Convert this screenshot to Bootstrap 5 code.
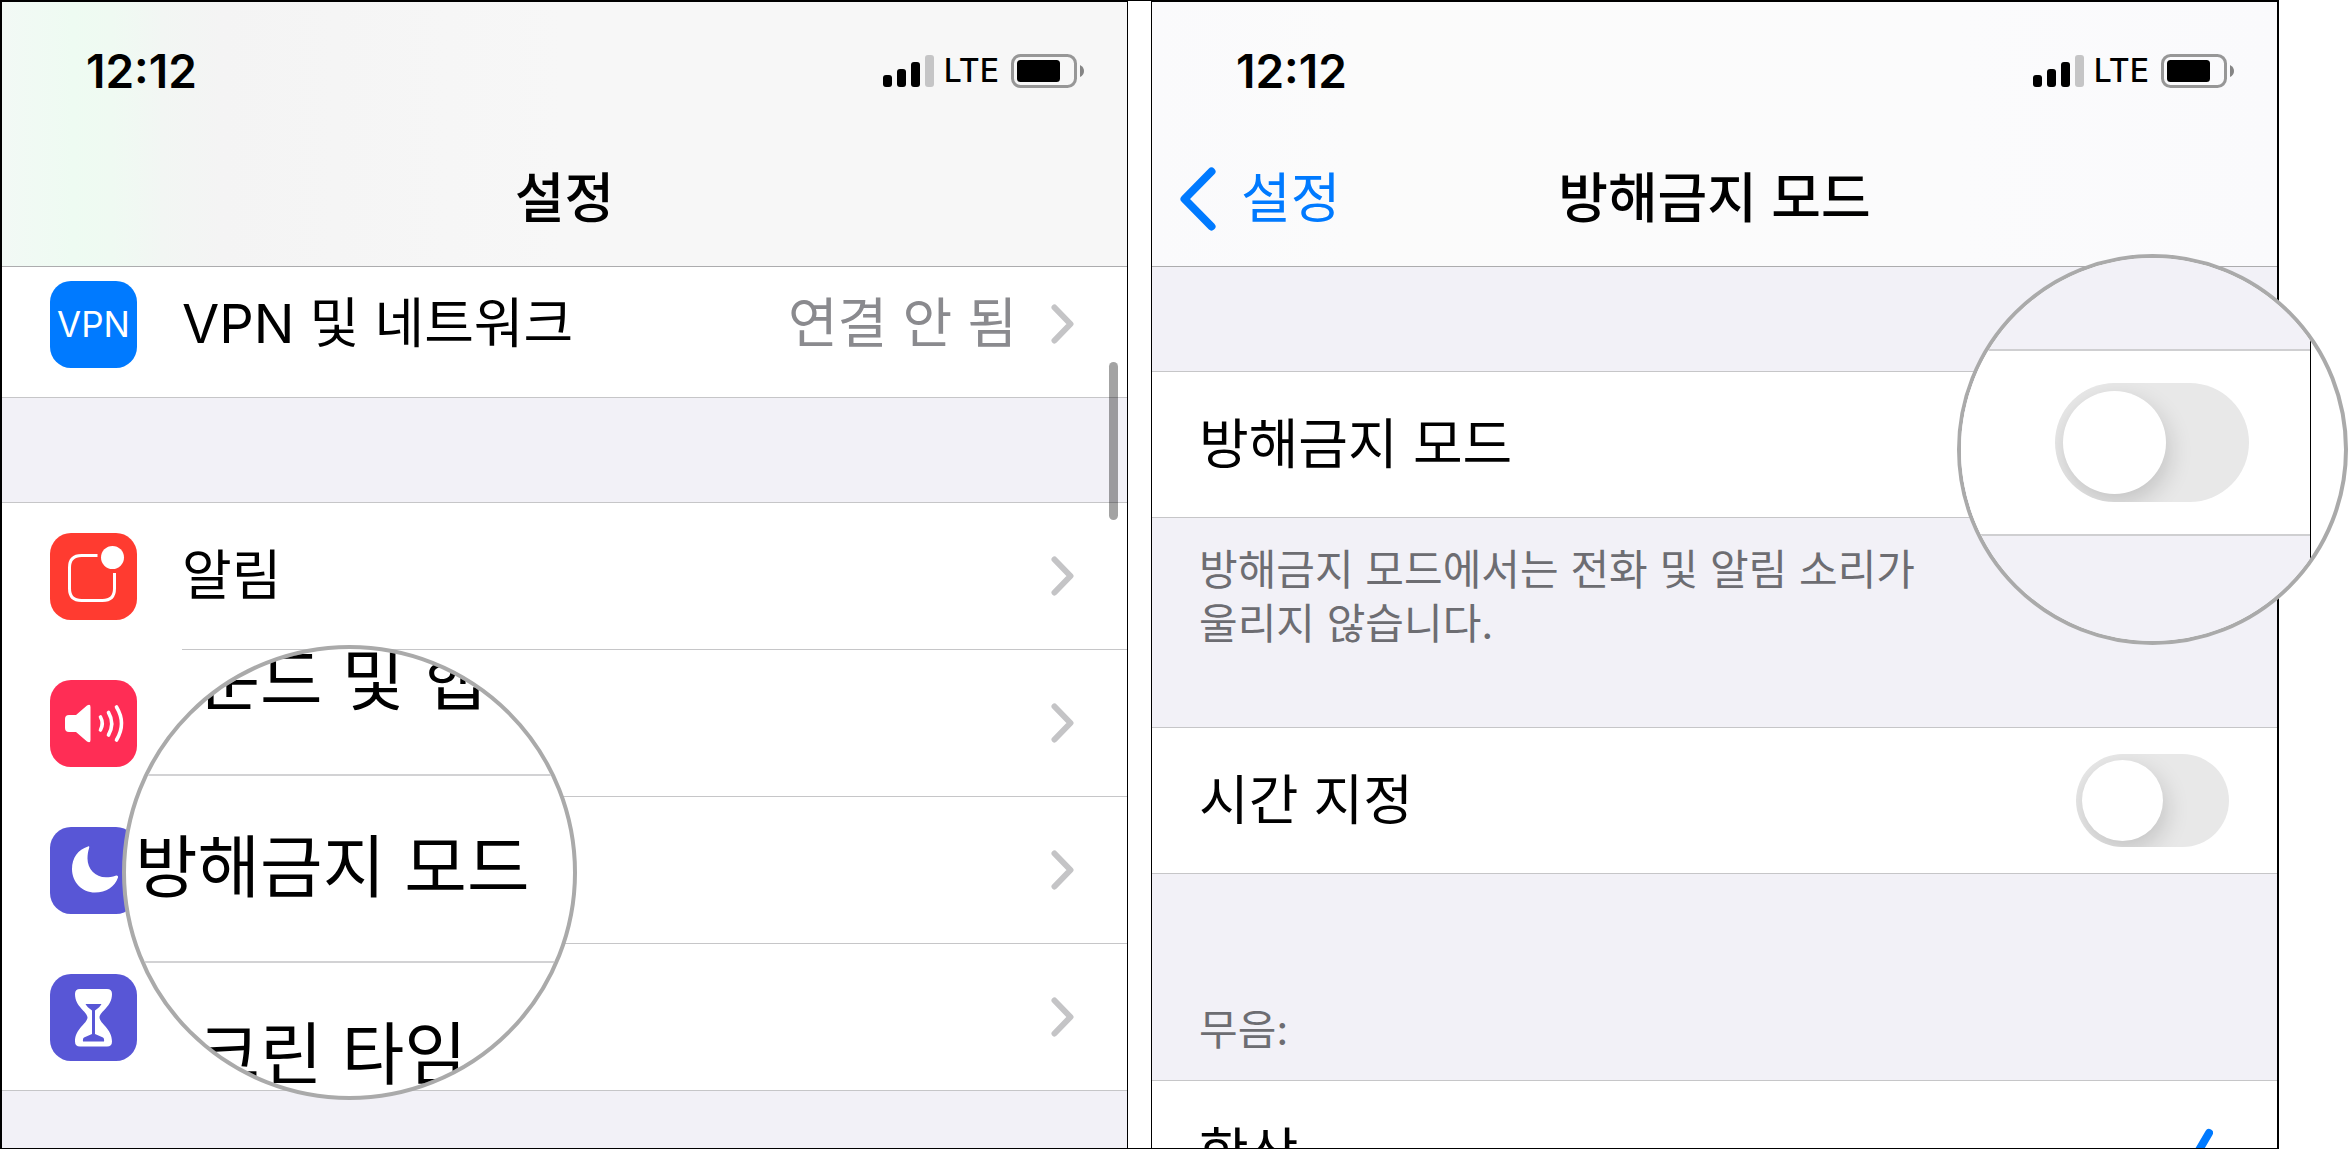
<!DOCTYPE html>
<html lang="ko">
<head>
<meta charset="utf-8">
<meta name="viewport" content="width=device-width, initial-scale=1">
<title>설정 – 방해금지 모드</title>
<link href="https://cdn.jsdelivr.net/npm/bootstrap@5.3.0/dist/css/bootstrap.min.css" rel="stylesheet">
<style>
  :root { --ios-blue: #007aff; --ios-bg: #f2f1f7; --ios-line: #c6c6c8; --ring: #aaa; }
  body { font-family: Inter, "Noto Sans CJK KR", sans-serif; font-size: 54px; line-height: 72px; color: #000; background: #fff; }
  a { color: inherit; text-decoration: none; }
  .stage { height: 100vh; padding-right: 69px; }
  .pair { gap: 23px; border: solid #000; border-width: 1px 0; }
  .phone { flex: 1 1 0; min-width: 0; }
  .screen { height: 100%; background: var(--ios-bg); border-top: 1px solid #000; }
  .screen-a { border-left: 2px solid #000; border-right: 1px solid #000; }
  .screen-b { border-left: 1px solid #000; border-right: 2px solid #000; }

  .topbar { position: relative; z-index: 1; border-bottom: 1px solid #acacae; }
  .topbar-a { background: linear-gradient(90deg, #f2f9f5 0, #eefbf2 70px, #effaf2 110px, #f2f6f3 160px, #f4f4f4 220px, #f7f7f7 560px); }
  .topbar-b { background: linear-gradient(90deg, #fafafc, #fbfbfb 200px, #fbfbfc 800px, #fafafc); }
  .statusbar { height: 138px; padding: 0 43px 0 84px; }
  .clock { font-size: 46px; font-weight: 600; }
  .carrier { font-size: 32px; font-weight: 500; margin: 0 12px 0 9px; }
  .titlebar { display: grid; grid-template-columns: 1fr auto 1fr; align-items: center; height: 126px; padding: 0 27px 9px; }
  .titlebar h1 { grid-column: 2; font-size: 54px; line-height: 72px; font-weight: 500; margin: 0; }
  .back { color: var(--ios-blue); gap: 25px; }

  .group { --bs-list-group-bg: #fff; border: solid var(--ios-line); border-width: 1px 0; border-radius: 0; }
  .cell { display: flex; align-items: center; border: 0; padding: 0 0 0 48px; background: #fff; color: #000; }
  .cell-body { flex: 1; display: flex; align-items: center; height: 147px; margin-left: 45px; padding-right: 53px; border-bottom: 1px solid var(--ios-line); }
  .cell:last-child .cell-body { border-bottom: 0; height: 146px; }
  .cell-plain { height: 145px; padding: 0 48px 0 47px; }
  .scrolled { margin-top: -17px; margin-bottom: 104px; }
  .app-tile { width: 87px; height: 87px; border-radius: 21px; flex: none; font-size: 35px; line-height: 87px; color: #fff; text-align: center; }
  .tile-blue { background: #007aff; } .tile-red { background: #ff3b30; } .tile-pink { background: #ff2d55; } .tile-indigo { background: #5856d6; }
  .detail { color: #8a8a8e; margin-right: 34px; }
  .first-group { margin-top: 104px; }
  .note { font-size: 42px; line-height: 54px; color: #6d6d72; padding: 25px 47px 76px; margin: 0; }
  .group-title { font-size: 42px; line-height: 54px; font-weight: 400; color: #6d6d72; padding: 129px 47px 23px; margin: 0; }
  .scroll-thumb { position: absolute; top: 361px; right: 10px; width: 9px; height: 158px; border-radius: 5px; background: rgba(0,0,0,.36); z-index: 1; }

  .toggle { appearance: none; display: block; position: relative; flex: none; margin: 0; border: 0; width: 153px; height: 93px; border-radius: 47px; background: #e8e8e8; overflow: hidden; }
  .toggle::before { content: ""; position: absolute; inset: 6px auto 6px 6px; aspect-ratio: 1; border-radius: 50%; background: #fff; box-shadow: 3px 9px 24px rgba(0,0,0,.16); }
  .toggle-lg { width: 194px; height: 119px; border-radius: 60px; }
  .toggle-lg::before { inset: 8px auto 8px 8px; }

  .lens { position: absolute; z-index: 2; border: 4px solid var(--ring); border-radius: 50%; overflow: hidden; background: #fff; }
  .lens-a { left: 122px; top: 644px; width: 455px; height: 455px; font-size: 68px; }
  .lens-a .zoomed { margin: -60px 0 0; }
  .lens-a .zoomed-row { height: 187px; padding: 0 0 4px 9px; border-bottom: 2px solid #d2d2d4; white-space: nowrap; }
  .lens-b { right: -69px; top: 253px; width: 391px; height: 391px; }
  .lens-b .edge { height: 100%; margin-right: 33px; border-right: 1px solid #000; background: var(--ios-bg); padding-top: 91px; }
  .lens-b .zoomed-cell { height: 187px; padding-right: 61px; background: #fff; border: solid #cfcfd1; border-width: 2px 0; }
</style>
<script src="https://cdn.jsdelivr.net/npm/bootstrap@5.3.0/dist/js/bootstrap.bundle.min.js"></script>
</head>
<body>
<svg class="d-none" aria-hidden="true">
  <symbol id="signal" viewBox="0 0 52 32"><rect y="20" width="9" height="12" rx="3"/><rect x="14" y="14" width="9" height="18" rx="3"/><rect x="28" y="7" width="9" height="25" rx="3"/><rect x="42" width="9" height="32" rx="3" fill="#c5c5c6"/></symbol>
  <symbol id="battery" viewBox="0 0 73 34"><rect x="1.5" y="1.5" width="63" height="31" rx="8" fill="none" stroke="#979797" stroke-width="3"/><rect x="6" y="6" width="43" height="22" rx="3.5"/><path d="M69 11q4 2 4 6t-4 6z" fill="#858585"/></symbol>
  <symbol id="chevron" viewBox="0 0 23 40"><path d="M3.500 3.500 19.500 20 3.500 36.500" fill="none" stroke="#c4c4c6" stroke-width="6" stroke-linecap="round" stroke-linejoin="round"/></symbol>
</svg>
<div class="stage overflow-hidden">
<div class="pair d-flex h-100">

  <section class="phone position-relative">
    <div class="screen screen-a overflow-hidden">
      <header class="topbar topbar-a">
        <div class="statusbar d-flex align-items-center">
          <span class="clock me-auto">12:12</span>
          <svg width="52" height="32"><use href="#signal"/></svg>
          <span class="carrier">LTE</span>
          <svg width="73" height="34"><use href="#battery"/></svg>
        </div>
        <div class="titlebar"><h1>설정</h1></div>
      </header>

      <nav class="list-group group scrolled">
        <a href="#" class="list-group-item cell">
          <span class="app-tile tile-blue">VPN</span>
          <span class="cell-body"><span class="me-auto">VPN 및 네트워크</span><span class="detail">연결 안 됨</span><svg width="23" height="40"><use href="#chevron"/></svg></span>
        </a>
      </nav>

      <nav class="list-group group">
        <a href="#" class="list-group-item cell">
          <svg class="app-tile tile-red" viewBox="0 0 87 87"><path d="M47.500 22.500H31.500Q19.500 22.500 19.500 34.500V55.500Q19.500 67.500 31.500 67.500H52.500Q64.500 67.500 64.500 55.500V40" fill="none" stroke="#fff" stroke-width="3"/><circle cx="62.500" cy="24.500" r="11.500" fill="#fff"/></svg>
          <span class="cell-body"><span class="me-auto">알림</span><svg width="23" height="40"><use href="#chevron"/></svg></span>
        </a>
        <a href="#" class="list-group-item cell" aria-labelledby="lens-sound">
          <svg class="app-tile tile-pink" viewBox="0 0 87 87"><path d="M19 35h7L37 25.500q3.500-2 3.500 1.500v33q0 3.500-3.500 1.500L26 52h-7q-4 0-4-4v-9q0-4 4-4z" fill="#fff"/><g fill="none" stroke="#fff" stroke-width="3.600" stroke-linecap="round"><path d="M50.500 37q3.500 6.500 0 13"/><path d="M58.500 32.500q6.500 11 0 22.500"/><path d="M66.500 27q10 16.500 0 33"/></g></svg>
          <span class="cell-body justify-content-end"><svg width="23" height="40"><use href="#chevron"/></svg></span>
        </a>
        <a href="#" class="list-group-item cell" aria-labelledby="lens-dnd">
          <svg class="app-tile tile-indigo" viewBox="0 0 87 87"><path d="M38 19.500C28 22.500 22 31 22 42c0 13 10 23.500 23 23.500 11 0 20-6 23-15 .5-1.500-1-2.500-2.500-1.700-3 1.200-6.500 1.500-9.500 1.500-11 0-18.500-8.300-18.500-18.800 0-4 .5-7 1.500-10 .5-1.500.5-2.500-1-2z" fill="#fff"/></svg>
          <span class="cell-body justify-content-end"><svg width="23" height="40"><use href="#chevron"/></svg></span>
        </a>
        <a href="#" class="list-group-item cell" aria-labelledby="lens-time">
          <svg class="app-tile tile-indigo" viewBox="0 0 87 87"><path d="M30 15H57Q62 15 62 20C62 33 50 37 49.500 43.500 50 50 62 54.500 62 67.500Q62 72.500 57 72.500H30Q25 72.500 25 67.500C25 54.500 37 50 37.500 43.500 37 37 25 33 25 20Q25 15 30 15Z" fill="#fff"/><path d="M35.500 30H51.500Q50 33 45 36.500V60L53 63.500Q54.500 64.500 54 67.500H33Q32.500 64.500 34 63.500L42 60V36.500Q37 33 35.500 30Z" fill="#5856d6"/></svg>
          <span class="cell-body justify-content-end"><svg width="23" height="40"><use href="#chevron"/></svg></span>
        </a>
      </nav>
    </div>
    <div class="scroll-thumb"></div>
    <div class="lens lens-a">
      <div class="zoomed">
        <div class="zoomed-row d-flex align-items-center" id="lens-sound">사운드 및 햅틱</div>
        <div class="zoomed-row d-flex align-items-center" id="lens-dnd">방해금지 모드</div>
        <div class="zoomed-row d-flex align-items-center" id="lens-time">스크린 타임</div>
      </div>
    </div>
  </section>

  <section class="phone position-relative">
    <div class="screen screen-b overflow-hidden">
      <header class="topbar topbar-b">
        <div class="statusbar d-flex align-items-center">
          <span class="clock me-auto">12:12</span>
          <svg width="52" height="32"><use href="#signal"/></svg>
          <span class="carrier">LTE</span>
          <svg width="73" height="34"><use href="#battery"/></svg>
        </div>
        <div class="titlebar">
          <a href="#" class="back d-flex align-items-center"><svg width="37" height="64" viewBox="0 0 37 64"><path d="M32.500 4.500 5.500 32 32.500 59.500" fill="none" stroke="currentColor" stroke-width="8" stroke-linecap="round" stroke-linejoin="round"/></svg>설정</a>
          <h1>방해금지 모드</h1>
        </div>
      </header>

      <div class="list-group group first-group">
        <div class="list-group-item cell cell-plain"><label for="dnd">방해금지 모드</label></div>
      </div>
      <p class="note">방해금지 모드에서는 전화 및 알림 소리가<br>울리지 않습니다.</p>

      <div class="list-group group">
        <div class="list-group-item cell cell-plain"><label class="me-auto" for="schedule">시간 지정</label><input class="toggle" type="checkbox" role="switch" id="schedule"></div>
      </div>
      <h2 class="group-title">무음:</h2>

      <div class="list-group group">
        <a href="#" class="list-group-item cell cell-plain"><span class="me-auto">항상</span><svg class="me-3" width="42" height="54" viewBox="0 0 42 54"><path d="M4 35 14 47 38 6" fill="none" stroke="#007aff" stroke-width="8" stroke-linecap="round" stroke-linejoin="round"/></svg></a>
      </div>
    </div>
    <div class="lens lens-b">
      <div class="edge">
        <div class="zoomed-cell d-flex align-items-center justify-content-end"><input class="toggle toggle-lg" type="checkbox" role="switch" id="dnd"></div>
      </div>
    </div>
  </section>

</div>
</div>
</body>
</html>
